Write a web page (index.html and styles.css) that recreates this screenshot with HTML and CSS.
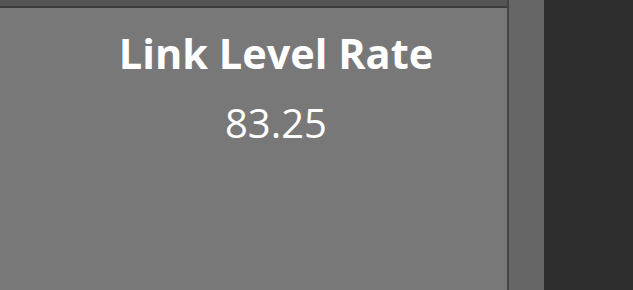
FILE: index.html
```html
<!DOCTYPE html>
<html lang="en">
<head>
  <meta charset="UTF-8">
  <title>Link Level Rate</title>
  <link rel="stylesheet" href="styles.css">
</head>
<body>
  <div class="screen">
    <div class="panel">
      <div class="panel-bar"></div>
      <div class="panel-body">
        <h1 class="kpi-title">Link Level Rate</h1>
        <div class="kpi-value">83.25</div>
      </div>
    </div>
    <div class="side-strip"></div>
    <div class="dark-area"></div>
  </div>
</body>
</html>
```

FILE: styles.css
```css
html, body {
  margin: 0;
  height: 100%;
}

body {
  font-family: 'Open Sans', 'Noto Sans', sans-serif;
  background-color: #2d2d2d;
  color: #fff;
}

.screen {
  display: flex;
  height: 100%;
}

.panel {
  width: 507px;
  display: flex;
  flex-direction: column;
  border-right: 2px solid #444444;
}

.panel-bar {
  height: 6px;
  background-color: #545454;
  border-bottom: 2px solid #3c3c3c;
}

.panel-body {
  flex: 1;
  background-color: #787878;
  text-align: center;
  padding-left: 45px;
  padding-top: 21px;
}

.kpi-title {
  margin: 0;
  font-size: 41.5px;
  font-weight: bold;
  line-height: 48px;
}

.kpi-value {
  font-size: 40px;
  line-height: 48px;
  margin-top: 22px;
}

.side-strip {
  width: 35px;
  background-color: #666666;
}

.dark-area {
  flex: 1;
  background-color: #2d2d2d;
}
```
